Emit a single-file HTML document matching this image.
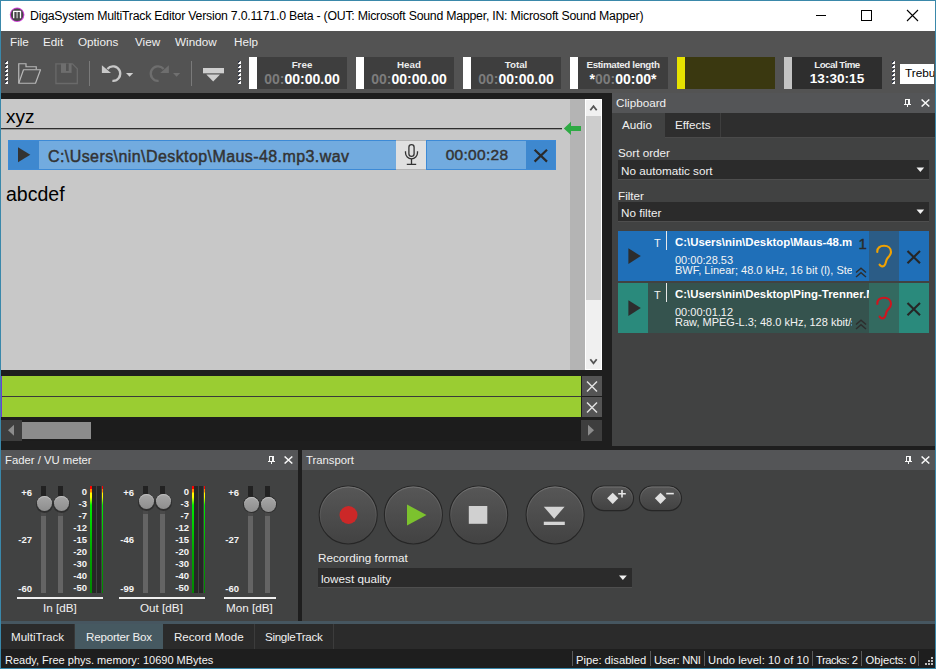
<!DOCTYPE html>
<html><head><meta charset="utf-8">
<style>
*{margin:0;padding:0;box-sizing:border-box}
html,body{width:936px;height:669px;overflow:hidden;background:#1e1e1e;font-family:"Liberation Sans",sans-serif}
.a{position:absolute}
.t{position:absolute;white-space:nowrap;line-height:1}
</style></head><body>
<div class="a" style="left:0;top:0;width:936px;height:669px;background:#1e1e1e">

<!-- window border -->
<div class="a" style="left:0;top:0;width:936px;height:669px;border:1px solid #3a88aa"></div>

<!-- title bar -->
<div class="a" style="left:1px;top:1px;width:934px;height:30px;background:#fff"></div>

<!-- menu + toolbar -->
<div class="a" style="left:1px;top:31px;width:934px;height:62px;background:#535353"></div>


<!-- title content -->
<svg class="a" style="left:9px;top:7px" width="17" height="17" viewBox="0 0 17 17">
<circle cx="8.1" cy="7.8" r="7.3" fill="#d040d8"/>
<circle cx="8.1" cy="7.8" r="6.3" fill="#474747"/>
<path d="M4.7 11.3V4.3H11.5V11.3" fill="none" stroke="#fff" stroke-width="1.3"/>
<path d="M8.1 4.9V11.3" stroke="#c4c4c4" stroke-width="1.3"/>
</svg>
<div class="t" style="left:30px;top:10px;font-size:12.3px;letter-spacing:-0.23px;color:#000">DigaSystem MultiTrack Editor Version 7.0.1171.0 Beta - (OUT: Microsoft Sound Mapper, IN: Microsoft Sound Mapper)</div>
<div class="a" style="left:816px;top:15px;width:10px;height:1px;background:#000"></div>
<div class="a" style="left:861px;top:10px;width:11px;height:11px;border:1px solid #000"></div>
<svg class="a" style="left:906px;top:9px" width="13" height="13" viewBox="0 0 13 13"><path d="M1 1L12 12M12 1L1 12" stroke="#000" stroke-width="1.1"/></svg>

<!-- menu -->
<div class="t" style="left:10px;top:36px;font-size:11.7px;color:#f0f0f0">File</div>
<div class="t" style="left:43px;top:36px;font-size:11.7px;color:#f0f0f0">Edit</div>
<div class="t" style="left:78px;top:36px;font-size:11.7px;color:#f0f0f0">Options</div>
<div class="t" style="left:135px;top:36px;font-size:11.7px;color:#f0f0f0">View</div>
<div class="t" style="left:175px;top:36px;font-size:11.7px;color:#f0f0f0">Window</div>
<div class="t" style="left:234px;top:36px;font-size:11.7px;color:#f0f0f0">Help</div>


<!-- toolbar icons -->
<svg class="a" style="left:0;top:0" width="936" height="95" viewBox="0 0 936 95">
<rect x="5" y="61" width="1" height="1" fill="#2a3040"/><rect x="6" y="61" width="1" height="1" fill="#3a4050"/><rect x="5" y="62" width="1" height="1" fill="#3a4050"/><rect x="6" y="62" width="2" height="2" fill="#fff"/><rect x="7" y="61" width="1" height="1" fill="#ddd"/><rect x="5" y="63" width="1" height="1" fill="#ddd"/><rect x="5" y="65" width="1" height="1" fill="#2a3040"/><rect x="6" y="65" width="1" height="1" fill="#3a4050"/><rect x="5" y="66" width="1" height="1" fill="#3a4050"/><rect x="6" y="66" width="2" height="2" fill="#fff"/><rect x="7" y="65" width="1" height="1" fill="#ddd"/><rect x="5" y="67" width="1" height="1" fill="#ddd"/><rect x="5" y="69" width="1" height="1" fill="#2a3040"/><rect x="6" y="69" width="1" height="1" fill="#3a4050"/><rect x="5" y="70" width="1" height="1" fill="#3a4050"/><rect x="6" y="70" width="2" height="2" fill="#fff"/><rect x="7" y="69" width="1" height="1" fill="#ddd"/><rect x="5" y="71" width="1" height="1" fill="#ddd"/><rect x="5" y="73" width="1" height="1" fill="#2a3040"/><rect x="6" y="73" width="1" height="1" fill="#3a4050"/><rect x="5" y="74" width="1" height="1" fill="#3a4050"/><rect x="6" y="74" width="2" height="2" fill="#fff"/><rect x="7" y="73" width="1" height="1" fill="#ddd"/><rect x="5" y="75" width="1" height="1" fill="#ddd"/><rect x="5" y="77" width="1" height="1" fill="#2a3040"/><rect x="6" y="77" width="1" height="1" fill="#3a4050"/><rect x="5" y="78" width="1" height="1" fill="#3a4050"/><rect x="6" y="78" width="2" height="2" fill="#fff"/><rect x="7" y="77" width="1" height="1" fill="#ddd"/><rect x="5" y="79" width="1" height="1" fill="#ddd"/><rect x="5" y="81" width="1" height="1" fill="#2a3040"/><rect x="6" y="81" width="1" height="1" fill="#3a4050"/><rect x="5" y="82" width="1" height="1" fill="#3a4050"/><rect x="6" y="82" width="2" height="2" fill="#fff"/><rect x="7" y="81" width="1" height="1" fill="#ddd"/><rect x="5" y="83" width="1" height="1" fill="#ddd"/><rect x="238" y="61" width="1" height="1" fill="#2a3040"/><rect x="239" y="61" width="1" height="1" fill="#3a4050"/><rect x="238" y="62" width="1" height="1" fill="#3a4050"/><rect x="239" y="62" width="2" height="2" fill="#fff"/><rect x="240" y="61" width="1" height="1" fill="#ddd"/><rect x="238" y="63" width="1" height="1" fill="#ddd"/><rect x="238" y="65" width="1" height="1" fill="#2a3040"/><rect x="239" y="65" width="1" height="1" fill="#3a4050"/><rect x="238" y="66" width="1" height="1" fill="#3a4050"/><rect x="239" y="66" width="2" height="2" fill="#fff"/><rect x="240" y="65" width="1" height="1" fill="#ddd"/><rect x="238" y="67" width="1" height="1" fill="#ddd"/><rect x="238" y="69" width="1" height="1" fill="#2a3040"/><rect x="239" y="69" width="1" height="1" fill="#3a4050"/><rect x="238" y="70" width="1" height="1" fill="#3a4050"/><rect x="239" y="70" width="2" height="2" fill="#fff"/><rect x="240" y="69" width="1" height="1" fill="#ddd"/><rect x="238" y="71" width="1" height="1" fill="#ddd"/><rect x="238" y="73" width="1" height="1" fill="#2a3040"/><rect x="239" y="73" width="1" height="1" fill="#3a4050"/><rect x="238" y="74" width="1" height="1" fill="#3a4050"/><rect x="239" y="74" width="2" height="2" fill="#fff"/><rect x="240" y="73" width="1" height="1" fill="#ddd"/><rect x="238" y="75" width="1" height="1" fill="#ddd"/><rect x="238" y="77" width="1" height="1" fill="#2a3040"/><rect x="239" y="77" width="1" height="1" fill="#3a4050"/><rect x="238" y="78" width="1" height="1" fill="#3a4050"/><rect x="239" y="78" width="2" height="2" fill="#fff"/><rect x="240" y="77" width="1" height="1" fill="#ddd"/><rect x="238" y="79" width="1" height="1" fill="#ddd"/><rect x="238" y="81" width="1" height="1" fill="#2a3040"/><rect x="239" y="81" width="1" height="1" fill="#3a4050"/><rect x="238" y="82" width="1" height="1" fill="#3a4050"/><rect x="239" y="82" width="2" height="2" fill="#fff"/><rect x="240" y="81" width="1" height="1" fill="#ddd"/><rect x="238" y="83" width="1" height="1" fill="#ddd"/><rect x="892" y="61" width="1" height="1" fill="#2a3040"/><rect x="893" y="61" width="1" height="1" fill="#3a4050"/><rect x="892" y="62" width="1" height="1" fill="#3a4050"/><rect x="893" y="62" width="2" height="2" fill="#fff"/><rect x="894" y="61" width="1" height="1" fill="#ddd"/><rect x="892" y="63" width="1" height="1" fill="#ddd"/><rect x="892" y="65" width="1" height="1" fill="#2a3040"/><rect x="893" y="65" width="1" height="1" fill="#3a4050"/><rect x="892" y="66" width="1" height="1" fill="#3a4050"/><rect x="893" y="66" width="2" height="2" fill="#fff"/><rect x="894" y="65" width="1" height="1" fill="#ddd"/><rect x="892" y="67" width="1" height="1" fill="#ddd"/><rect x="892" y="69" width="1" height="1" fill="#2a3040"/><rect x="893" y="69" width="1" height="1" fill="#3a4050"/><rect x="892" y="70" width="1" height="1" fill="#3a4050"/><rect x="893" y="70" width="2" height="2" fill="#fff"/><rect x="894" y="69" width="1" height="1" fill="#ddd"/><rect x="892" y="71" width="1" height="1" fill="#ddd"/><rect x="892" y="73" width="1" height="1" fill="#2a3040"/><rect x="893" y="73" width="1" height="1" fill="#3a4050"/><rect x="892" y="74" width="1" height="1" fill="#3a4050"/><rect x="893" y="74" width="2" height="2" fill="#fff"/><rect x="894" y="73" width="1" height="1" fill="#ddd"/><rect x="892" y="75" width="1" height="1" fill="#ddd"/><rect x="892" y="77" width="1" height="1" fill="#2a3040"/><rect x="893" y="77" width="1" height="1" fill="#3a4050"/><rect x="892" y="78" width="1" height="1" fill="#3a4050"/><rect x="893" y="78" width="2" height="2" fill="#fff"/><rect x="894" y="77" width="1" height="1" fill="#ddd"/><rect x="892" y="79" width="1" height="1" fill="#ddd"/><rect x="892" y="81" width="1" height="1" fill="#2a3040"/><rect x="893" y="81" width="1" height="1" fill="#3a4050"/><rect x="892" y="82" width="1" height="1" fill="#3a4050"/><rect x="893" y="82" width="2" height="2" fill="#fff"/><rect x="894" y="81" width="1" height="1" fill="#ddd"/><rect x="892" y="83" width="1" height="1" fill="#ddd"/>
<!-- folder -->
<path d="M18.75 83.25V63.75H26V66.75H36.25V69.25" fill="none" stroke="#b8b8b8" stroke-width="1.2"/>
<path d="M18.75 83.25H35.5L40.5 69.75H23.5Z" fill="none" stroke="#b8b8b8" stroke-width="1.2" stroke-linejoin="round"/>
<!-- save -->
<path d="M55.9 63.9H72.5L77.3 68.7V83.5H55.9Z" fill="none" stroke="#6a6a6a" stroke-width="1.3"/>
<path d="M61 63.5H71.6V72.9H61Z" fill="#6e6e6e"/>
<rect x="66" y="63.5" width="2.7" height="7.5" fill="#535353"/>
<!-- sep -->
<rect x="89" y="61" width="1" height="25" fill="#7a7a7a"/>
<rect x="191" y="61" width="1" height="25" fill="#7a7a7a"/>
<!-- undo -->
<path d="M107.4 68.9A7.3 7.3 0 1 1 112.4 80.9" fill="none" stroke="#c8c8c8" stroke-width="2.3"/>
<path d="M101.9 65.2V72.9H111Z" fill="#c8c8c8"/>
<path d="M126 73H133.2L129.6 76.8Z" fill="#d0d0d0"/>
<!-- redo -->
<path d="M163.6 68.9A7.3 7.3 0 1 0 158.6 80.9" fill="none" stroke="#6e6e6e" stroke-width="2.3"/>
<path d="M168.9 65.2V72.9H160.2Z" fill="#6e6e6e"/>
<path d="M173 73H180.2L176.6 76.8Z" fill="#707070"/>
<!-- eject-ish -->
<rect x="203" y="68" width="21" height="5.3" fill="#cfcfcf"/>
<path d="M206.3 74.5H220L213.2 81.4Z" fill="#cfcfcf"/>
</svg>

<!-- time displays -->
<div class="a" style="left:249px;top:57px;width:8px;height:32px;background:#fff"></div>
<div class="a" style="left:257px;top:57px;width:90px;height:32px;background:#3e3e3e"></div>
<div class="t" style="left:257px;top:59.6px;width:90px;text-align:center;font-size:9.8px;font-weight:bold;color:#ececec">Free</div>
<div class="t" style="left:257px;top:71.75px;width:90px;text-align:center;font-size:14px;font-weight:bold;color:#fff"><span style="color:#7c7c7c">00:</span>00:00.00</div>
<div class="a" style="left:356px;top:57px;width:8px;height:32px;background:#fff"></div>
<div class="a" style="left:364px;top:57px;width:90px;height:32px;background:#3e3e3e"></div>
<div class="t" style="left:364px;top:59.6px;width:90px;text-align:center;font-size:9.8px;font-weight:bold;color:#ececec">Head</div>
<div class="t" style="left:364px;top:71.75px;width:90px;text-align:center;font-size:14px;font-weight:bold;color:#fff"><span style="color:#7c7c7c">00:</span>00:00.00</div>
<div class="a" style="left:463px;top:57px;width:8px;height:32px;background:#fff"></div>
<div class="a" style="left:471px;top:57px;width:90px;height:32px;background:#3e3e3e"></div>
<div class="t" style="left:471px;top:59.6px;width:90px;text-align:center;font-size:9.8px;font-weight:bold;color:#ececec">Total</div>
<div class="t" style="left:471px;top:71.75px;width:90px;text-align:center;font-size:14px;font-weight:bold;color:#fff"><span style="color:#7c7c7c">00:</span>00:00.00</div>
<div class="a" style="left:570px;top:57px;width:8px;height:32px;background:#fff"></div>
<div class="a" style="left:578px;top:57px;width:90px;height:32px;background:#3e3e3e"></div>
<div class="t" style="left:578px;top:59.6px;width:90px;text-align:center;font-size:9.8px;font-weight:bold;color:#ececec;letter-spacing:-0.37px">Estimated length</div>
<div class="t" style="left:578px;top:71.75px;width:90px;text-align:center;font-size:14px;font-weight:bold;color:#fff">*<span style="color:#7c7c7c">00:</span>00:00*</div>
<div class="a" style="left:677px;top:57px;width:8px;height:32px;background:#e6e200"></div>
<div class="a" style="left:685px;top:57px;width:90px;height:32px;background:#3a3810"></div>
<div class="a" style="left:784px;top:57px;width:8px;height:32px;background:#c4c4c4"></div>
<div class="a" style="left:792px;top:57px;width:90px;height:32px;background:#2e2e2e"></div>
<div class="t" style="left:792px;top:59.6px;width:90px;text-align:center;font-size:9.8px;font-weight:bold;color:#ececec;letter-spacing:-0.55px">Local Time</div>
<div class="t" style="left:792px;top:72.09px;width:90px;text-align:center;font-size:13.6px;font-weight:bold;color:#fff">13:30:15</div>
<div class="a" style="left:900px;top:64px;width:34px;height:20px;background:#fff"></div>
<div class="a" style="left:900px;top:64px;width:34px;height:20px;overflow:hidden"><div class="t" style="left:5px;top:3.5px;font-size:11.8px;color:#000">Trebu</div></div>

<!-- dark band -->
<div class="a" style="left:1px;top:93px;width:934px;height:357px;background:#1e1e1e"></div>

<!-- editor -->
<div class="a" style="left:1px;top:99px;width:569px;height:271px;background:#c8c8c8"></div>
<div class="a" style="left:570px;top:99px;width:15px;height:271px;background:#b4b4b4"></div>
<div class="a" style="left:585px;top:99px;width:17px;height:271px;background:#f0f0f0;border:1px solid #fff"></div>
<div class="a" style="left:586px;top:116px;width:15px;height:184px;background:#cdcdcd"></div>
<svg class="a" style="left:585px;top:99px" width="17" height="271" viewBox="585 99 17 271">
<path d="M590.3 110.3L593.5 106.2L596.7 110.3" fill="none" stroke="#555" stroke-width="1.8"/>
<path d="M590.3 359.3L593.5 363.4L596.7 359.3" fill="none" stroke="#555" stroke-width="1.8"/>
</svg>
<!-- green bars -->
<div class="a" style="left:1px;top:376px;width:1px;height:41px;background:#7040d0"></div>
<div class="a" style="left:2px;top:376px;width:579px;height:20px;background:#9acd32"></div>
<div class="a" style="left:2px;top:396px;width:579px;height:1px;background:#3a3a3a"></div>
<div class="a" style="left:2px;top:397px;width:579px;height:20px;background:#9acd32"></div>
<div class="a" style="left:582px;top:376px;width:20px;height:20px;background:#545454"></div>
<div class="a" style="left:582px;top:397px;width:20px;height:20px;background:#545454"></div>
<svg class="a" style="left:582px;top:376px" width="20" height="41" viewBox="582 376 20 41">
<path d="M587 381.5L597 391.5M597 381.5L587 391.5" stroke="#e0e0e0" stroke-width="1.5"/>
<path d="M587 402.5L597 412.5M597 402.5L587 412.5" stroke="#e0e0e0" stroke-width="1.5"/>
</svg>
<!-- h scrollbar -->
<div class="a" style="left:1px;top:420px;width:601px;height:21px;background:#1c1c1c"></div>
<div class="a" style="left:1px;top:420px;width:21px;height:21px;background:#3e3e3e"></div>
<div class="a" style="left:22px;top:422px;width:69px;height:17px;background:#8c8c8c"></div>
<div class="a" style="left:581px;top:420px;width:21px;height:21px;background:#3e3e3e"></div>
<svg class="a" style="left:0;top:420px" width="602" height="21" viewBox="0 420 602 21">
<path d="M8 430.2L14 424.7V435.7Z" fill="#8c8c8c"/>
<path d="M588 424.7L594 430.2L588 435.7Z" fill="#8c8c8c"/>
</svg>


<!-- editor content -->
<div class="t" style="left:6px;top:107px;font-size:19px;color:#000">xyz</div>
<div class="a" style="left:1px;top:128px;width:561px;height:1px;background:#2e2e2e"></div>
<div class="a" style="left:1px;top:129px;width:561px;height:1px;background:#9a9a9a"></div>
<svg class="a" style="left:560px;top:118px" width="26" height="20" viewBox="560 118 26 20">
<path d="M563.8 128.5L571 121.8V125.9H581V130.9H571V135Z" fill="#2eaa44"/>
</svg>
<!-- track item -->
<div class="a" style="left:8px;top:140px;width:31px;height:30px;background:#3e88cf;border:1px solid #3d8ad6;border-right:none"></div>
<div class="a" style="left:39px;top:140px;width:358px;height:30px;background:#72abdf;border:1px solid #3d8ad6;border-left:none"></div>
<svg class="a" style="left:18px;top:147px" width="13" height="16" viewBox="0 0 13 16"><path d="M0 0.3L12.3 7.8L0 15.3Z" fill="#333"/></svg>
<div class="t" style="left:48px;top:149px;font-size:16px;letter-spacing:0.42px;-webkit-text-stroke:0.45px #333;color:#333">C:\Users\nin\Desktop\Maus-48.mp3.wav</div>
<div class="a" style="left:396px;top:140px;width:30px;height:30px;background:#e0e0e0;border-top:1px solid #b4b4b4;border-bottom:1px solid #b4b4b4"></div>
<svg class="a" style="left:396px;top:140px" width="30" height="30" viewBox="396 140 30 30">
<rect x="408.9" y="144.7" width="5.2" height="11.6" rx="2.6" fill="none" stroke="#333" stroke-width="1.3"/>
<path d="M405.5 151.2V152.8A6 6 0 0 0 417.5 152.8V151.2" fill="none" stroke="#333" stroke-width="1.3"/>
<path d="M411.5 158.8V164.2M406.8 164.3H416.2" fill="none" stroke="#333" stroke-width="1.3"/>
</svg>
<div class="a" style="left:426px;top:140px;width:100px;height:30px;background:#72abdf;border:1px solid #3d8ad6;border-right:none"></div>
<div class="t" style="left:426px;top:147px;width:102px;text-align:center;font-size:15.5px;letter-spacing:0.3px;-webkit-text-stroke:0.45px #333;color:#333">00:00:28</div>
<div class="a" style="left:526px;top:140px;width:30px;height:30px;background:#3e88cf;border:1px solid #3d8ad6;border-left:none"></div>
<svg class="a" style="left:526px;top:140px" width="30" height="30" viewBox="526 140 30 30"><path d="M534.6 149.8L547 161.6M547 149.8L534.6 161.6" stroke="#2a2a2a" stroke-width="2.2"/></svg>
<div class="t" style="left:6px;top:185px;font-size:19.5px;color:#000">abcdef</div>

<!-- clipboard panel -->
<div class="a" style="left:612px;top:93px;width:323px;height:353px;background:#414242"></div>
<div class="a" style="left:612px;top:93px;width:323px;height:20px;background:#545557"></div>


<!-- clipboard content -->
<div class="t" style="left:616px;top:97px;font-size:11.7px;color:#f0f0f0">Clipboard</div>
<svg class="a" style="left:904px;top:99px" width="8" height="8" viewBox="0 0 8 8"><rect x="1" y="0" width="5" height="1" fill="#f8f8f8"/><rect x="1" y="0" width="1" height="5" fill="#f8f8f8"/><rect x="4" y="0" width="2" height="5" fill="#f8f8f8"/><rect x="0" y="5" width="7" height="1" fill="#f8f8f8"/><rect x="3" y="6" width="1" height="2" fill="#f8f8f8"/></svg>
<svg class="a" style="left:921px;top:99px" width="9" height="8" viewBox="0 0 9 8"><path d="M0.6 0.5L8.3 7.5M8.3 0.5L0.6 7.5" stroke="#f8f8f8" stroke-width="1.5"/></svg>
<div class="a" style="left:612px;top:113px;width:323px;height:24px;background:#2e2e2e"></div>
<div class="a" style="left:612px;top:113px;width:53px;height:25px;background:#414242"></div>
<div class="a" style="left:720px;top:113px;width:1px;height:24px;background:#3e3e3e"></div>
<div class="a" style="left:665px;top:137px;width:270px;height:1px;background:#4a4a4a"></div>
<div class="t" style="left:622px;top:119px;font-size:11.7px;color:#f0f0f0">Audio</div>
<div class="t" style="left:675px;top:119px;font-size:11.7px;color:#f0f0f0">Effects</div>
<div class="t" style="left:618px;top:147px;font-size:11.7px;color:#f0f0f0">Sort order</div>
<div class="a" style="left:618px;top:160px;width:311px;height:20px;background:#2b2b2b;border-bottom:1px solid #4e4e4e"></div>
<div class="t" style="left:621px;top:165px;font-size:11.7px;color:#f0f0f0">No automatic sort</div>
<svg class="a" style="left:916px;top:167px" width="9" height="6" viewBox="0 0 9 6"><path d="M0.5 0.6H8.2L4.35 5Z" fill="#f0f0f0"/></svg>
<div class="t" style="left:618px;top:189.5px;font-size:11.7px;color:#f0f0f0">Filter</div>
<div class="a" style="left:618px;top:202px;width:311px;height:20px;background:#2b2b2b;border-bottom:1px solid #4e4e4e"></div>
<div class="t" style="left:621px;top:207px;font-size:11.7px;color:#f0f0f0">No filter</div>
<svg class="a" style="left:916px;top:209px" width="9" height="6" viewBox="0 0 9 6"><path d="M0.5 0.6H8.2L4.35 5Z" fill="#f0f0f0"/></svg>
<div class="a" style="left:618px;top:231px;width:311px;height:50px;background:#1f6fb8"></div>
<div class="a" style="left:618px;top:231px;width:30px;height:50px;background:#1f6fb8"></div>
<div class="a" style="left:869px;top:231px;width:30px;height:50px;background:#2b5c86"></div>
<div class="a" style="left:899px;top:231px;width:30px;height:50px;background:#1f6fb8"></div>
<svg class="a" style="left:628px;top:248px" width="14" height="17" viewBox="0 0 14 17"><path d="M0.4 0.2L12.8 8.1L0.4 16Z" fill="#2d2d2d"/></svg>
<div class="t" style="left:654px;top:237.5px;font-size:11px;color:#f4f4f4">T</div>
<div class="a" style="left:666px;top:231px;width:1px;height:19px;background:#e8e8e8"></div>
<div class="a" style="left:675px;top:231px;width:177px;height:50px;overflow:hidden">
<div class="t" style="left:0;top:6px;font-size:11.4px;font-weight:bold;color:#fff">C:\Users\nin\Desktop\Maus-48.mp3.wav</div>
<div class="t" style="left:0;top:23.5px;font-size:11px;color:#f4f4f4">00:00:28.53</div>
<div class="t" style="left:0;top:34px;font-size:11px;color:#f4f4f4">BWF, Linear; 48.0 kHz, 16 bit (l), Stereo</div>
</div>
<svg class="a" style="left:855px;top:267px" width="13" height="11" viewBox="0 0 13 11"><path d="M1 5.5L6 1.2L11 5.5M1 10L6 5.7L11 10" fill="none" stroke="#2d2d2d" stroke-width="1.4"/></svg>
<svg class="a" style="left:869px;top:231px" width="30" height="50" viewBox="869 231 30 50"><path d="M877.3 252C877 247.8 880 245.8 884 245.8C888.3 245.8 891 248.5 891 252C891 255.3 888 257 886.7 259.5C885.6 261.6 886.2 264.2 884 265.8C882.5 266.9 880.6 266.2 879.6 264.6" fill="none" stroke="#f2a200" stroke-width="2.1" stroke-linecap="round"/></svg>
<svg class="a" style="left:899px;top:231px" width="30" height="50" viewBox="899 231 30 50"><path d="M907.5 251L920 263.3M920 251L907.5 263.3" stroke="#262626" stroke-width="2.1"/></svg>
<div class="t" style="left:858.5px;top:235.5px;font-size:15px;-webkit-text-stroke:0.4px #2a2a2a;color:#2a2a2a">1</div>
<div class="a" style="left:618px;top:283px;width:311px;height:50px;background:#35534e"></div>
<div class="a" style="left:618px;top:283px;width:30px;height:50px;background:#2a8a7c"></div>
<div class="a" style="left:869px;top:283px;width:30px;height:50px;background:#336a60"></div>
<div class="a" style="left:899px;top:283px;width:30px;height:50px;background:#2a8a7c"></div>
<svg class="a" style="left:628px;top:300px" width="14" height="17" viewBox="0 0 14 17"><path d="M0.4 0.2L12.8 8.1L0.4 16Z" fill="#2d2d2d"/></svg>
<div class="t" style="left:654px;top:289.5px;font-size:11px;color:#f4f4f4">T</div>
<div class="a" style="left:666px;top:283px;width:1px;height:19px;background:#e8e8e8"></div>
<div class="a" style="left:675px;top:283px;width:194px;height:20px;overflow:hidden">
<div class="t" style="left:0;top:6px;font-size:11.4px;font-weight:bold;color:#fff">C:\Users\nin\Desktop\Ping-Trenner.MP3</div>
</div>
<div class="a" style="left:675px;top:303px;width:177px;height:30px;overflow:hidden">
<div class="t" style="left:0;top:3.5px;font-size:11px;color:#f4f4f4">00:00:01.12</div>
<div class="t" style="left:0;top:14px;font-size:11px;color:#f4f4f4">Raw, MPEG-L.3; 48.0 kHz, 128 kbit/s</div>
</div>
<svg class="a" style="left:855px;top:319px" width="13" height="11" viewBox="0 0 13 11"><path d="M1 5.5L6 1.2L11 5.5M1 10L6 5.7L11 10" fill="none" stroke="#2d2d2d" stroke-width="1.4"/></svg>
<svg class="a" style="left:869px;top:283px" width="30" height="50" viewBox="869 231 30 50"><path d="M877.3 252C877 247.8 880 245.8 884 245.8C888.3 245.8 891 248.5 891 252C891 255.3 888 257 886.7 259.5C885.6 261.6 886.2 264.2 884 265.8C882.5 266.9 880.6 266.2 879.6 264.6" fill="none" stroke="#d0141e" stroke-width="2.1" stroke-linecap="round"/></svg>
<svg class="a" style="left:899px;top:283px" width="30" height="50" viewBox="899 231 30 50"><path d="M907.5 251L920 263.3M920 251L907.5 263.3" stroke="#262626" stroke-width="2.1"/></svg>

<!-- fader panel -->
<div class="a" style="left:1px;top:450px;width:297px;height:171px;background:#414242"></div>
<div class="a" style="left:1px;top:450px;width:297px;height:20px;background:#545557"></div>


<!-- fader content -->
<div class="t" style="left:5px;top:455px;font-size:11.3px;color:#f0f0f0">Fader / VU meter</div>
<svg class="a" style="left:268px;top:456px" width="8" height="8" viewBox="0 0 8 8"><rect x="1" y="0" width="5" height="1" fill="#f8f8f8"/><rect x="1" y="0" width="1" height="5" fill="#f8f8f8"/><rect x="4" y="0" width="2" height="5" fill="#f8f8f8"/><rect x="0" y="5" width="7" height="1" fill="#f8f8f8"/><rect x="3" y="6" width="1" height="2" fill="#f8f8f8"/></svg>
<svg class="a" style="left:284px;top:456px" width="9" height="8" viewBox="0 0 9 8"><path d="M0.6 0.5L8.3 7.5M8.3 0.5L0.6 7.5" stroke="#f8f8f8" stroke-width="1.5"/></svg>
<div class="t" style="font-size:9.5px;font-weight:bold;color:#f4f4f4;text-align:right;width:30px;left:2px;top:488px">+6</div>
<div class="t" style="font-size:9.5px;font-weight:bold;color:#f4f4f4;text-align:right;width:30px;left:2px;top:535px">-27</div>
<div class="t" style="font-size:9.5px;font-weight:bold;color:#f4f4f4;text-align:right;width:30px;left:2px;top:584px">-60</div>
<div class="a" style="left:41px;top:486px;width:5px;height:107px;background:#646464"></div>
<div class="a" style="left:41px;top:486px;width:5px;height:17.5px;background:#222"></div>
<div class="a" style="left:41px;top:510.5px;width:5px;height:5px;background:#4a4a4a"></div>
<div class="a" style="left:35.5px;top:495.5px;width:17px;height:17px;border-radius:50%;background:#2a2a2a;opacity:.85"></div>
<div class="a" style="left:36.5px;top:496.0px;width:15px;height:15px;border-radius:50%;background:linear-gradient(#a6a6a6,#8e8e8e);box-shadow:inset 0 1px 0 #bcbcbc"></div>
<div class="a" style="left:58px;top:486px;width:5px;height:107px;background:#646464"></div>
<div class="a" style="left:58px;top:486px;width:5px;height:17.5px;background:#222"></div>
<div class="a" style="left:58px;top:510.5px;width:5px;height:5px;background:#4a4a4a"></div>
<div class="a" style="left:52.5px;top:495.5px;width:17px;height:17px;border-radius:50%;background:#2a2a2a;opacity:.85"></div>
<div class="a" style="left:53.5px;top:496.0px;width:15px;height:15px;border-radius:50%;background:linear-gradient(#a6a6a6,#8e8e8e);box-shadow:inset 0 1px 0 #bcbcbc"></div>
<div class="t" style="font-size:9.5px;font-weight:bold;color:#f4f4f4;text-align:right;width:30px;left:57px;top:487px">0</div>
<div class="t" style="font-size:9.5px;font-weight:bold;color:#f4f4f4;text-align:right;width:30px;left:57px;top:499px">-3</div>
<div class="t" style="font-size:9.5px;font-weight:bold;color:#f4f4f4;text-align:right;width:30px;left:57px;top:511px">-7</div>
<div class="t" style="font-size:9.5px;font-weight:bold;color:#f4f4f4;text-align:right;width:30px;left:57px;top:523px">-12</div>
<div class="t" style="font-size:9.5px;font-weight:bold;color:#f4f4f4;text-align:right;width:30px;left:57px;top:535px">-15</div>
<div class="t" style="font-size:9.5px;font-weight:bold;color:#f4f4f4;text-align:right;width:30px;left:57px;top:547px">-20</div>
<div class="t" style="font-size:9.5px;font-weight:bold;color:#f4f4f4;text-align:right;width:30px;left:57px;top:559px">-30</div>
<div class="t" style="font-size:9.5px;font-weight:bold;color:#f4f4f4;text-align:right;width:30px;left:57px;top:571px">-40</div>
<div class="t" style="font-size:9.5px;font-weight:bold;color:#f4f4f4;text-align:right;width:30px;left:57px;top:583px">-50</div>
<div class="a" style="left:90px;top:486px;width:1.6px;height:107px;background:linear-gradient(#f00 0,#f00 3px,#ff8000 3px,#ff8000 6px,#ff0 7px,#ff0 11px,#0e0 19px,#0a0 60%,#080 100%)"></div>
<div class="a" style="left:101.6px;top:486px;width:1.6px;height:107px;background:linear-gradient(#f00 0,#f00 3px,#ff8000 3px,#ff8000 6px,#ff0 7px,#ff0 11px,#0e0 19px,#0a0 60%,#080 100%)"></div>
<div class="a" style="left:92px;top:486px;width:4px;height:107px;background:#262626"></div>
<div class="a" style="left:97px;top:486px;width:4px;height:107px;background:#262626"></div>
<div class="a" style="left:17px;top:597px;width:86px;height:1.5px;background:#f0f0f0"></div>
<div class="t" style="left:43px;top:602px;font-size:11.7px;color:#f0f0f0">In [dB]</div>
<div class="t" style="font-size:9.5px;font-weight:bold;color:#f4f4f4;text-align:right;width:30px;left:104px;top:488px">+6</div>
<div class="t" style="font-size:9.5px;font-weight:bold;color:#f4f4f4;text-align:right;width:30px;left:104px;top:535px">-46</div>
<div class="t" style="font-size:9.5px;font-weight:bold;color:#f4f4f4;text-align:right;width:30px;left:104px;top:584px">-99</div>
<div class="a" style="left:143px;top:486px;width:5px;height:107px;background:#646464"></div>
<div class="a" style="left:143px;top:486px;width:5px;height:15.5px;background:#222"></div>
<div class="a" style="left:143px;top:508.5px;width:5px;height:5px;background:#4a4a4a"></div>
<div class="a" style="left:137.5px;top:493.5px;width:17px;height:17px;border-radius:50%;background:#2a2a2a;opacity:.85"></div>
<div class="a" style="left:138.5px;top:494.0px;width:15px;height:15px;border-radius:50%;background:linear-gradient(#a6a6a6,#8e8e8e);box-shadow:inset 0 1px 0 #bcbcbc"></div>
<div class="a" style="left:160px;top:486px;width:5px;height:107px;background:#646464"></div>
<div class="a" style="left:160px;top:486px;width:5px;height:15.5px;background:#222"></div>
<div class="a" style="left:160px;top:508.5px;width:5px;height:5px;background:#4a4a4a"></div>
<div class="a" style="left:154.5px;top:493.5px;width:17px;height:17px;border-radius:50%;background:#2a2a2a;opacity:.85"></div>
<div class="a" style="left:155.5px;top:494.0px;width:15px;height:15px;border-radius:50%;background:linear-gradient(#a6a6a6,#8e8e8e);box-shadow:inset 0 1px 0 #bcbcbc"></div>
<div class="t" style="font-size:9.5px;font-weight:bold;color:#f4f4f4;text-align:right;width:30px;left:159px;top:487px">0</div>
<div class="t" style="font-size:9.5px;font-weight:bold;color:#f4f4f4;text-align:right;width:30px;left:159px;top:499px">-3</div>
<div class="t" style="font-size:9.5px;font-weight:bold;color:#f4f4f4;text-align:right;width:30px;left:159px;top:511px">-7</div>
<div class="t" style="font-size:9.5px;font-weight:bold;color:#f4f4f4;text-align:right;width:30px;left:159px;top:523px">-12</div>
<div class="t" style="font-size:9.5px;font-weight:bold;color:#f4f4f4;text-align:right;width:30px;left:159px;top:535px">-15</div>
<div class="t" style="font-size:9.5px;font-weight:bold;color:#f4f4f4;text-align:right;width:30px;left:159px;top:547px">-20</div>
<div class="t" style="font-size:9.5px;font-weight:bold;color:#f4f4f4;text-align:right;width:30px;left:159px;top:559px">-30</div>
<div class="t" style="font-size:9.5px;font-weight:bold;color:#f4f4f4;text-align:right;width:30px;left:159px;top:571px">-40</div>
<div class="t" style="font-size:9.5px;font-weight:bold;color:#f4f4f4;text-align:right;width:30px;left:159px;top:583px">-50</div>
<div class="a" style="left:192px;top:486px;width:1.6px;height:107px;background:linear-gradient(#f00 0,#f00 3px,#ff8000 3px,#ff8000 6px,#ff0 7px,#ff0 11px,#0e0 19px,#0a0 60%,#080 100%)"></div>
<div class="a" style="left:203.6px;top:486px;width:1.6px;height:107px;background:linear-gradient(#f00 0,#f00 3px,#ff8000 3px,#ff8000 6px,#ff0 7px,#ff0 11px,#0e0 19px,#0a0 60%,#080 100%)"></div>
<div class="a" style="left:194px;top:486px;width:4px;height:107px;background:#262626"></div>
<div class="a" style="left:199px;top:486px;width:4px;height:107px;background:#262626"></div>
<div class="a" style="left:119px;top:597px;width:86px;height:1.5px;background:#f0f0f0"></div>
<div class="t" style="left:140px;top:602px;font-size:11.7px;color:#f0f0f0">Out [dB]</div>
<div class="t" style="font-size:9.5px;font-weight:bold;color:#f4f4f4;text-align:right;width:30px;left:209px;top:488px">+6</div>
<div class="t" style="font-size:9.5px;font-weight:bold;color:#f4f4f4;text-align:right;width:30px;left:209px;top:535px">-27</div>
<div class="t" style="font-size:9.5px;font-weight:bold;color:#f4f4f4;text-align:right;width:30px;left:209px;top:584px">-60</div>
<div class="a" style="left:248px;top:486px;width:5px;height:107px;background:#646464"></div>
<div class="a" style="left:248px;top:486px;width:5px;height:18.0px;background:#222"></div>
<div class="a" style="left:248px;top:511.0px;width:5px;height:5px;background:#4a4a4a"></div>
<div class="a" style="left:242.5px;top:496.0px;width:17px;height:17px;border-radius:50%;background:#2a2a2a;opacity:.85"></div>
<div class="a" style="left:243.5px;top:496.5px;width:15px;height:15px;border-radius:50%;background:linear-gradient(#a6a6a6,#8e8e8e);box-shadow:inset 0 1px 0 #bcbcbc"></div>
<div class="a" style="left:265px;top:486px;width:5px;height:107px;background:#646464"></div>
<div class="a" style="left:265px;top:486px;width:5px;height:18.0px;background:#222"></div>
<div class="a" style="left:265px;top:511.0px;width:5px;height:5px;background:#4a4a4a"></div>
<div class="a" style="left:259.5px;top:496.0px;width:17px;height:17px;border-radius:50%;background:#2a2a2a;opacity:.85"></div>
<div class="a" style="left:260.5px;top:496.5px;width:15px;height:15px;border-radius:50%;background:linear-gradient(#a6a6a6,#8e8e8e);box-shadow:inset 0 1px 0 #bcbcbc"></div>
<div class="a" style="left:224px;top:597px;width:52px;height:1.5px;background:#f0f0f0"></div>
<div class="t" style="left:226px;top:602px;font-size:11.7px;color:#f0f0f0">Mon [dB]</div>

<!-- transport panel -->
<div class="a" style="left:302px;top:450px;width:633px;height:171px;background:#414242"></div>
<div class="a" style="left:302px;top:450px;width:633px;height:20px;background:#545557"></div>


<!-- transport content -->
<div class="t" style="left:306px;top:455px;font-size:11.3px;color:#f0f0f0">Transport</div>
<svg class="a" style="left:905px;top:456px" width="8" height="8" viewBox="0 0 8 8"><rect x="1" y="0" width="5" height="1" fill="#f8f8f8"/><rect x="1" y="0" width="1" height="5" fill="#f8f8f8"/><rect x="4" y="0" width="2" height="5" fill="#f8f8f8"/><rect x="0" y="5" width="7" height="1" fill="#f8f8f8"/><rect x="3" y="6" width="1" height="2" fill="#f8f8f8"/></svg>
<svg class="a" style="left:921px;top:456px" width="9" height="8" viewBox="0 0 9 8"><path d="M0.6 0.5L8.3 7.5M8.3 0.5L0.6 7.5" stroke="#f8f8f8" stroke-width="1.5"/></svg>
<svg class="a" style="left:302px;top:470px" width="400" height="90" viewBox="302 470 400 90">
<defs>
<linearGradient id="bg" x1="0" y1="0" x2="0" y2="1"><stop offset="0" stop-color="#575757"/><stop offset="1" stop-color="#424242"/></linearGradient>
<linearGradient id="hl" x1="0" y1="0" x2="0" y2="1"><stop offset="0" stop-color="#777" stop-opacity="1"/><stop offset="0.6" stop-color="#666" stop-opacity="0.3"/><stop offset="1" stop-color="#555" stop-opacity="0"/></linearGradient>
</defs>
<circle cx="348.2" cy="515" r="29" fill="url(#bg)" stroke="#262626" stroke-width="1.1"/><circle cx="348.2" cy="515" r="28" fill="none" stroke="url(#hl)" stroke-width="0.9"/>
<circle cx="413.4" cy="515" r="29" fill="url(#bg)" stroke="#262626" stroke-width="1.1"/><circle cx="413.4" cy="515" r="28" fill="none" stroke="url(#hl)" stroke-width="0.9"/>
<circle cx="478.7" cy="515" r="29" fill="url(#bg)" stroke="#262626" stroke-width="1.1"/><circle cx="478.7" cy="515" r="28" fill="none" stroke="url(#hl)" stroke-width="0.9"/>
<circle cx="555.1" cy="515" r="29" fill="url(#bg)" stroke="#262626" stroke-width="1.1"/><circle cx="555.1" cy="515" r="28" fill="none" stroke="url(#hl)" stroke-width="0.9"/>
<circle cx="348.5" cy="515" r="9" fill="#cc2828"/>
<path d="M407 504.5L426.5 515L407 525.6Z" fill="#7cc22e"/>
<rect x="468.8" y="506" width="18.5" height="17.8" fill="#d0d0d0"/>
<path d="M543.8 506.7H564.6L554.2 518.8Z" fill="#d4d4d4"/>
<rect x="543.8" y="521.7" width="21" height="3.3" fill="#d4d4d4"/>
<rect x="591.5" y="486" width="42" height="24.6" rx="12.3" fill="url(#bg)" stroke="#262626" stroke-width="1.2"/><rect x="592.5" y="487" width="40" height="22.6" rx="11.3" fill="none" stroke="url(#hl)" stroke-width="0.8"/>
<rect x="639.5" y="486" width="42" height="24.6" rx="12.3" fill="url(#bg)" stroke="#262626" stroke-width="1.2"/><rect x="640.5" y="487" width="40" height="22.6" rx="11.3" fill="none" stroke="url(#hl)" stroke-width="0.8"/>
<path d="M612.7 492.7L618.3 498.3L612.7 503.9L607.1 498.3Z" fill="#e0e0e0"/>
<path d="M622 490V497.6M618.2 493.8H625.8" stroke="#e8e8e8" stroke-width="1.6"/>
<path d="M660.5 492.7L666.1 498.3L660.5 503.9L654.9 498.3Z" fill="#e0e0e0"/>
<path d="M666.2 493.6H673.8" stroke="#e8e8e8" stroke-width="1.6"/>
</svg>
<div class="t" style="left:318px;top:552px;font-size:11.7px;color:#f0f0f0">Recording format</div>
<div class="a" style="left:318px;top:568px;width:314px;height:20px;background:#2b2b2b;border-bottom:1px solid #4e4e4e"></div>
<div class="t" style="left:321px;top:573px;font-size:11.7px;color:#f0f0f0">lowest quality</div>
<svg class="a" style="left:618px;top:575px" width="10" height="6" viewBox="0 0 10 6"><path d="M1 0.6H8.8L4.9 5Z" fill="#f0f0f0"/></svg>

<!-- strip -->
<div class="a" style="left:1px;top:621px;width:934px;height:3px;background:#465660"></div>
<!-- tabs row -->
<div class="a" style="left:1px;top:624px;width:934px;height:25px;background:#2b2b2b"></div>
<!-- status -->
<div class="a" style="left:1px;top:649px;width:934px;height:19px;background:#1e1e1e"></div>


<!-- tabs content -->
<div class="a" style="left:75px;top:624px;width:88px;height:25px;background:#465961"></div>
<div class="a" style="left:74px;top:624px;width:1px;height:25px;background:#383838"></div>
<div class="a" style="left:254px;top:624px;width:1px;height:25px;background:#3c3c3c"></div>
<div class="a" style="left:333px;top:624px;width:1px;height:25px;background:#3c3c3c"></div>
<div class="t" style="left:11px;top:631px;font-size:11.6px;color:#f0f0f0">MultiTrack</div>
<div class="t" style="left:86px;top:631px;font-size:11.6px;color:#f0f0f0;letter-spacing:-0.2px">Reporter Box</div>
<div class="t" style="left:174px;top:631px;font-size:11.6px;color:#f0f0f0">Record Mode</div>
<div class="t" style="left:265px;top:631px;font-size:11.6px;color:#f0f0f0;letter-spacing:-0.3px">SingleTrack</div>
<!-- status content -->
<div class="t" style="left:5px;top:655px;font-size:11px;color:#f4f4f4">Ready, Free phys. memory: 10690 MBytes</div>
<div class="a" style="left:572px;top:651px;width:1px;height:15px;background:#5a5a5a"></div>
<div class="a" style="left:650px;top:651px;width:1px;height:15px;background:#5a5a5a"></div>
<div class="a" style="left:704px;top:651px;width:1px;height:15px;background:#5a5a5a"></div>
<div class="a" style="left:812px;top:651px;width:1px;height:15px;background:#5a5a5a"></div>
<div class="a" style="left:861px;top:651px;width:1px;height:15px;background:#5a5a5a"></div>
<div class="a" style="left:918px;top:651px;width:1px;height:15px;background:#5a5a5a"></div>
<div class="t" style="left:576px;top:655px;font-size:11.2px;color:#f4f4f4">Pipe: disabled</div>
<div class="t" style="left:654px;top:655px;font-size:11.2px;color:#f4f4f4;letter-spacing:-0.27px">User: NNI</div>
<div class="t" style="left:708px;top:655px;font-size:11.2px;color:#f4f4f4;letter-spacing:0.08px">Undo level: 10 of 10</div>
<div class="t" style="left:816px;top:655px;font-size:11.2px;color:#f4f4f4;letter-spacing:-0.45px">Tracks: 2</div>
<div class="t" style="left:865.5px;top:655px;font-size:11.2px;color:#f4f4f4">Objects: 0</div>
<svg class="a" style="left:920px;top:654px" width="15" height="14" viewBox="0 0 15 14">
<rect x="11" y="3" width="2" height="2" fill="#bbb"/><rect x="8" y="6" width="2" height="2" fill="#bbb"/><rect x="11" y="6" width="2" height="2" fill="#bbb"/>
<rect x="5" y="9" width="2" height="2" fill="#bbb"/><rect x="8" y="9" width="2" height="2" fill="#bbb"/><rect x="11" y="9" width="2" height="2" fill="#bbb"/>
</svg>

<!-- window border -->
<div class="a" style="left:0;top:0;width:936px;height:669px;border:1px solid #3a88aa"></div>
</div>
</body></html>
